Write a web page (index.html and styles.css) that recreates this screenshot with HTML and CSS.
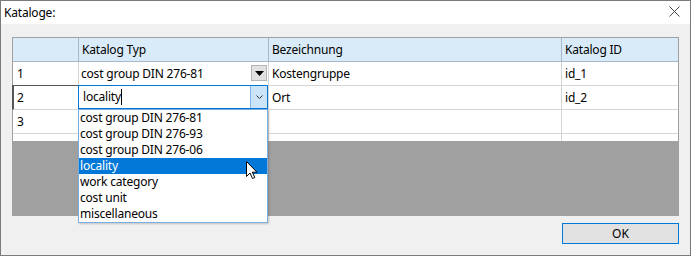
FILE: index.html
```html
<!DOCTYPE html>
<html>
<head>
    <title>Kataloge</title>
    <meta charset="UTF-8">
    <link rel="stylesheet" href="styles.css">
</head>
<body>

<div class="window">
    <div class="titlebar">
        <span class="title">Kataloge:</span>
        <svg class="close" width="11" height="11" viewBox="0 0 11 11">
            <path d="M0.5 0.5 L10.5 10.5 M10.5 0.5 L0.5 10.5" stroke="#444" stroke-width="1" fill="none"/>
        </svg>
    </div>

    <div class="content">
        <div class="datagrid">
            <div class="row head">
                <div class="cell rowhead"></div>
                <div class="cell">Katalog Typ</div>
                <div class="cell">Bezeichnung</div>
                <div class="cell">Katalog ID</div>
            </div>
            <div class="row">
                <div class="cell rowhead">1</div>
                <div class="cell combo-cell">
                    <span>cost group DIN 276-81</span>
                    <span class="drop-btn">
                        <svg width="9" height="5" viewBox="0 0 9 5"><path d="M0 0 H9 L4.5 5 Z" fill="#000"/></svg>
                    </span>
                </div>
                <div class="cell">Kostengruppe</div>
                <div class="cell">id_1</div>
            </div>
            <div class="row">
                <div class="cell rowhead current">2</div>
                <div class="cell edit-cell">
                    <div class="editor">
                        <span class="edit-text">locality<span class="caret"></span></span>
                        <span class="edit-btn">
                            <svg width="7" height="4" viewBox="0 0 7 4"><path d="M0.5 0.5 L3.5 3.5 L6.5 0.5" stroke="#333" stroke-width="1" fill="none"/></svg>
                        </span>
                    </div>
                </div>
                <div class="cell">Ort</div>
                <div class="cell">id_2</div>
            </div>
            <div class="row">
                <div class="cell rowhead">3</div>
                <div class="cell"></div>
                <div class="cell"></div>
                <div class="cell"></div>
            </div>
            <div class="row stub">
                <div class="cell rowhead"></div>
                <div class="cell"></div>
                <div class="cell"></div>
                <div class="cell"></div>
            </div>
            <div class="empty"></div>
        </div>

        <div class="actions">
            <button class="ok">OK</button>
        </div>
    </div>

    <ul class="dropdown">
        <li>cost group DIN 276-81</li>
        <li>cost group DIN 276-93</li>
        <li>cost group DIN 276-06</li>
        <li class="selected">locality</li>
        <li>work category</li>
        <li>cost unit</li>
        <li>miscellaneous</li>
    </ul>

    <svg class="cursor" width="13" height="19" viewBox="0 0 13 19">
        <path d="M0.5 0.5 L0.5 15.5 L4 12 L6.5 17.5 L8.8 16.5 L6.3 11.2 L11 11.2 Z" fill="#fff" stroke="#000" stroke-width="1" stroke-linejoin="miter"/>
    </svg>
</div>

</body>
</html>
```

FILE: styles.css
```css
body {
    margin: 0;
    padding: 0;
    background: #f0f0f0;
    font-family: "Noto Sans", "Open Sans", sans-serif;
    font-size: 12px;
    letter-spacing: -0.2px;
    color: #000;
}

.window {
    position: relative;
    width: 691px;
    height: 256px;
    box-sizing: border-box;
    border: 1px solid #7a7a7a;
    background: #f0f0f0;
}

.titlebar {
    height: 23px;
    background: #fff;
    display: flex;
    align-items: center;
    justify-content: space-between;
    padding: 0 10px 0 3px;
}

.title {
    line-height: 16px;
}

.close {
    display: block;
    margin-top: -2px;
}

.content {
    padding: 13px 11px 0 11px;
}

.datagrid {
    width: 667px;
    height: 179px;
    box-sizing: border-box;
    border: 1px solid #a0a0a0;
    display: flex;
    flex-direction: column;
}

.row {
    display: grid;
    grid-template-columns: 66px 190px 293px 116px;
    height: 24px;
    background: #fff;
}

.cell {
    box-sizing: border-box;
    border-right: 1px solid #d5d5d5;
    border-bottom: 1px solid #d5d5d5;
    padding: 0 3px;
    line-height: 23px;
    white-space: nowrap;
    overflow: hidden;
}

.cell:last-child {
    border-right: none;
    padding-left: 3px;
}

.row.head .cell {
    background: #d9ebf9;
    border-right-color: #a6b9cc;
    border-bottom-color: #a6b9cc;
    padding-left: 3px;
}

.rowhead {
    padding-left: 4px;
}

.rowhead.current {
    border-left: 2px solid #555;
    border-top: 1px solid #555;
    margin-left: -1px;
    margin-top: -1px;
    height: 25px;
    padding-left: 3px;
    line-height: 24px;
}

.combo-cell {
    display: flex;
    justify-content: space-between;
    align-items: center;
    padding: 0 1px 0 2px;
}

.drop-btn {
    width: 16px;
    height: 16px;
    box-sizing: border-box;
    background: #e1e1e1;
    border: 1px solid #b4b4b4;
    display: flex;
    align-items: center;
    justify-content: center;
    margin-top: -1px;
}

.drop-btn svg {
    display: block;
}

.edit-cell {
    position: relative;
    overflow: visible;
}

.editor {
    position: absolute;
    left: -1px;
    top: -1px;
    width: 190px;
    height: 24px;
    box-sizing: border-box;
    border: 1px solid #0078d7;
    background: #fff;
    display: flex;
    justify-content: space-between;
    z-index: 2;
}

.edit-text {
    padding-left: 4px;
    line-height: 22px;
    display: flex;
    align-items: center;
}

.caret {
    display: inline-block;
    width: 1px;
    height: 16px;
    background: #000;
}

.edit-btn {
    width: 16px;
    background: #cce4f7;
    border-left: 1px solid #7eb4ea;
    display: flex;
    align-items: center;
    justify-content: center;
}

.edit-btn svg {
    display: block;
}

.row.stub {
    height: 7px;
}

.row.stub .cell {
    border-bottom: none;
}

.empty {
    flex: 1;
    background: #a0a0a0;
}

.actions {
    display: flex;
    justify-content: flex-end;
    padding-top: 7px;
    width: 667px;
}

.ok {
    width: 117px;
    height: 21px;
    box-sizing: border-box;
    border: 1px solid #0078d7;
    background: #e1e1e1;
    font-family: "Noto Sans", "Open Sans", sans-serif;
    font-size: 12px;
    padding: 0;
    line-height: 18px;
    color: #000;
}

.dropdown {
    position: absolute;
    left: 77px;
    top: 108px;
    width: 190px;
    height: 114px;
    box-sizing: border-box;
    margin: 0;
    padding: 0;
    list-style: none;
    background: #fff;
    border: 1px solid #7aaee0;
    box-shadow: 1px 1px 2px rgba(0, 0, 0, 0.2);
    z-index: 3;
}

.dropdown li {
    height: 16px;
    line-height: 16px;
    padding-left: 1px;
    white-space: nowrap;
}

.dropdown li.selected {
    background: #0078d7;
    color: #fff;
}

.cursor {
    position: absolute;
    left: 245px;
    top: 160px;
    z-index: 4;
}
```
